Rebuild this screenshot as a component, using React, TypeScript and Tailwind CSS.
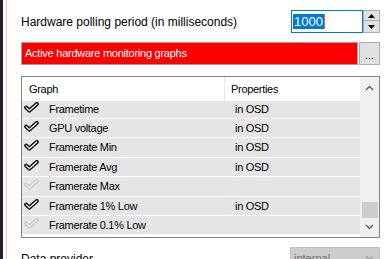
import React from "react";

type Row = { name: string; on: boolean; prop: string };

const rows: Row[] = [
  { name: "Frametime", on: true, prop: "in OSD" },
  { name: "GPU voltage", on: true, prop: "in OSD" },
  { name: "Framerate Min", on: true, prop: "in OSD" },
  { name: "Framerate Avg", on: true, prop: "in OSD" },
  { name: "Framerate Max", on: false, prop: "" },
  { name: "Framerate 1% Low", on: true, prop: "in OSD" },
  { name: "Framerate 0.1% Low", on: false, prop: "" },
];

function Check({ on }: { on: boolean }) {
  const outer = on ? "#000000" : "#c9c9c9";
  const inner = on ? "#ffffff" : "#ececec";
  return (
    <svg width="15" height="11" viewBox="0 0 15 11" className="block">
      <path
        d="M2.2 5.6 L5.4 8.6 L12.8 2"
        fill="none"
        stroke={outer}
        strokeWidth="4"
        strokeLinecap="round"
        strokeLinejoin="round"
      />
      <path
        d="M2.2 5.6 L5.4 8.6 L12.8 2"
        fill="none"
        stroke={inner}
        strokeWidth="1.3"
        strokeLinecap="round"
        strokeLinejoin="round"
      />
    </svg>
  );
}

function Chevron({ up, color = "#606060" }: { up?: boolean; color?: string }) {
  return (
    <svg width="9" height="6" viewBox="0 0 9 6" className="block">
      <path
        d={up ? "M1 5 L4.5 1.5 L8 5" : "M1 1 L4.5 4.5 L8 1"}
        fill="none"
        stroke={color}
        strokeWidth="1.4"
      />
    </svg>
  );
}

export default function App() {
  return (
    <div
      className="flex h-[259px] w-[388px] overflow-hidden bg-white text-[12px] text-black"
      style={{ fontFamily: '"Liberation Sans", Arial, sans-serif' }}
    >
      <div className="h-full w-[3px] shrink-0 bg-[#2a1c2c]" />
      <div className="h-full w-[3px] shrink-0 bg-white" />
      <div className="h-full w-px shrink-0 bg-[#d4d4d4]" />

      <div className="flex min-w-0 flex-1 flex-col pl-[14px] pr-[8px]">
        {/* polling period */}
        <div className="mt-[10px] flex h-[23px] shrink-0 items-center justify-between">
          <span className="pt-[1px]">Hardware polling period (in milliseconds)</span>
          <div className="flex h-[23px]">
            <div className="flex w-[72px] items-center border border-[#0078d7] pl-[1px]">
              <span className="bg-[#0078d7] px-[1px] text-[13px] leading-[15px] text-white">
                1000
              </span>
              <span className="h-[15px] w-px bg-[#e07020]" />
            </div>
            <div className="flex w-[17px] flex-col">
              <div className="flex h-[11px] items-center justify-center border border-[#adadad] bg-[#e1e1e1]">
                <svg width="7" height="4" viewBox="0 0 7 4">
                  <path d="M0 4 L3.5 0 L7 4 Z" fill="#000" />
                </svg>
              </div>
              <div className="flex h-[12px] items-center justify-center border border-t-0 border-[#adadad] bg-[#e1e1e1]">
                <svg width="7" height="4" viewBox="0 0 7 4">
                  <path d="M0 0 L3.5 4 L7 0 Z" fill="#000" />
                </svg>
              </div>
            </div>
          </div>
        </div>

        {/* active graphs bar */}
        <div className="mt-[9px] flex h-[23px] shrink-0 gap-px">
          <div className="flex flex-1 items-center border border-[#a0a0a0] bg-[#ff0000] pl-[3px] text-[11px] tracking-[-0.25px] text-white">
            Active hardware monitoring graphs
          </div>
          <div className="flex w-[21px] items-center justify-center border border-[#adadad] bg-[#e1e1e1] pt-[4px] text-[11px] leading-none">
            ...
          </div>
        </div>

        {/* list view */}
        <div className="mt-[11px] flex h-[162px] shrink-0 border border-[#828282] text-[11px] tracking-[-0.3px]">
          <div className="flex min-w-0 flex-1 flex-col">
            <div className="flex h-[24px] shrink-0 items-center bg-white">
              <div className="flex h-full w-[203px] items-center border-r border-[#e5e5e5] pl-[7px]">
                Graph
              </div>
              <div className="pl-[6px]">Properties</div>
            </div>
            <div className="flex-1 overflow-hidden">
              <div className="-mt-[1.4px]">
                {rows.map((r) => (
                  <div
                    key={r.name}
                    className="flex h-[19.4px] border-b border-white bg-[#e5e5e5]"
                  >
                    <div className="flex w-[203px] items-center">
                      <div className="w-[27px] self-start pl-[2px] pt-[2px]">
                        <Check on={r.on} />
                      </div>
                      <span>{r.name}</span>
                    </div>
                    <div className="flex items-center pl-[10px]">{r.prop}</div>
                  </div>
                ))}
              </div>
            </div>
          </div>
          <div className="flex w-[19px] shrink-0 flex-col items-center bg-[#f0f0f0]">
            <div className="flex h-[20px] items-center justify-center pt-[2px]">
              <Chevron up />
            </div>
            <div className="flex-1" />
            <div className="h-[16px] w-[16px] bg-[#cdcdcd]" />
            <div className="flex h-[19px] items-center justify-center pb-[1px]">
              <Chevron />
            </div>
          </div>
        </div>

        {/* data provider */}
        <div className="mt-[9px] flex shrink-0 items-start justify-between">
          <span className="pt-[3px]">Data provider</span>
          <div className="flex h-[22px] w-[90px] items-center justify-between border border-[#bfbfbf] bg-[#cccccc] pl-[3px] pr-[5px] text-[11px] text-[#6d6d6d]">
            <span>internal</span>
            <Chevron color="#a0a0a0" />
          </div>
        </div>
      </div>
    </div>
  );
}
